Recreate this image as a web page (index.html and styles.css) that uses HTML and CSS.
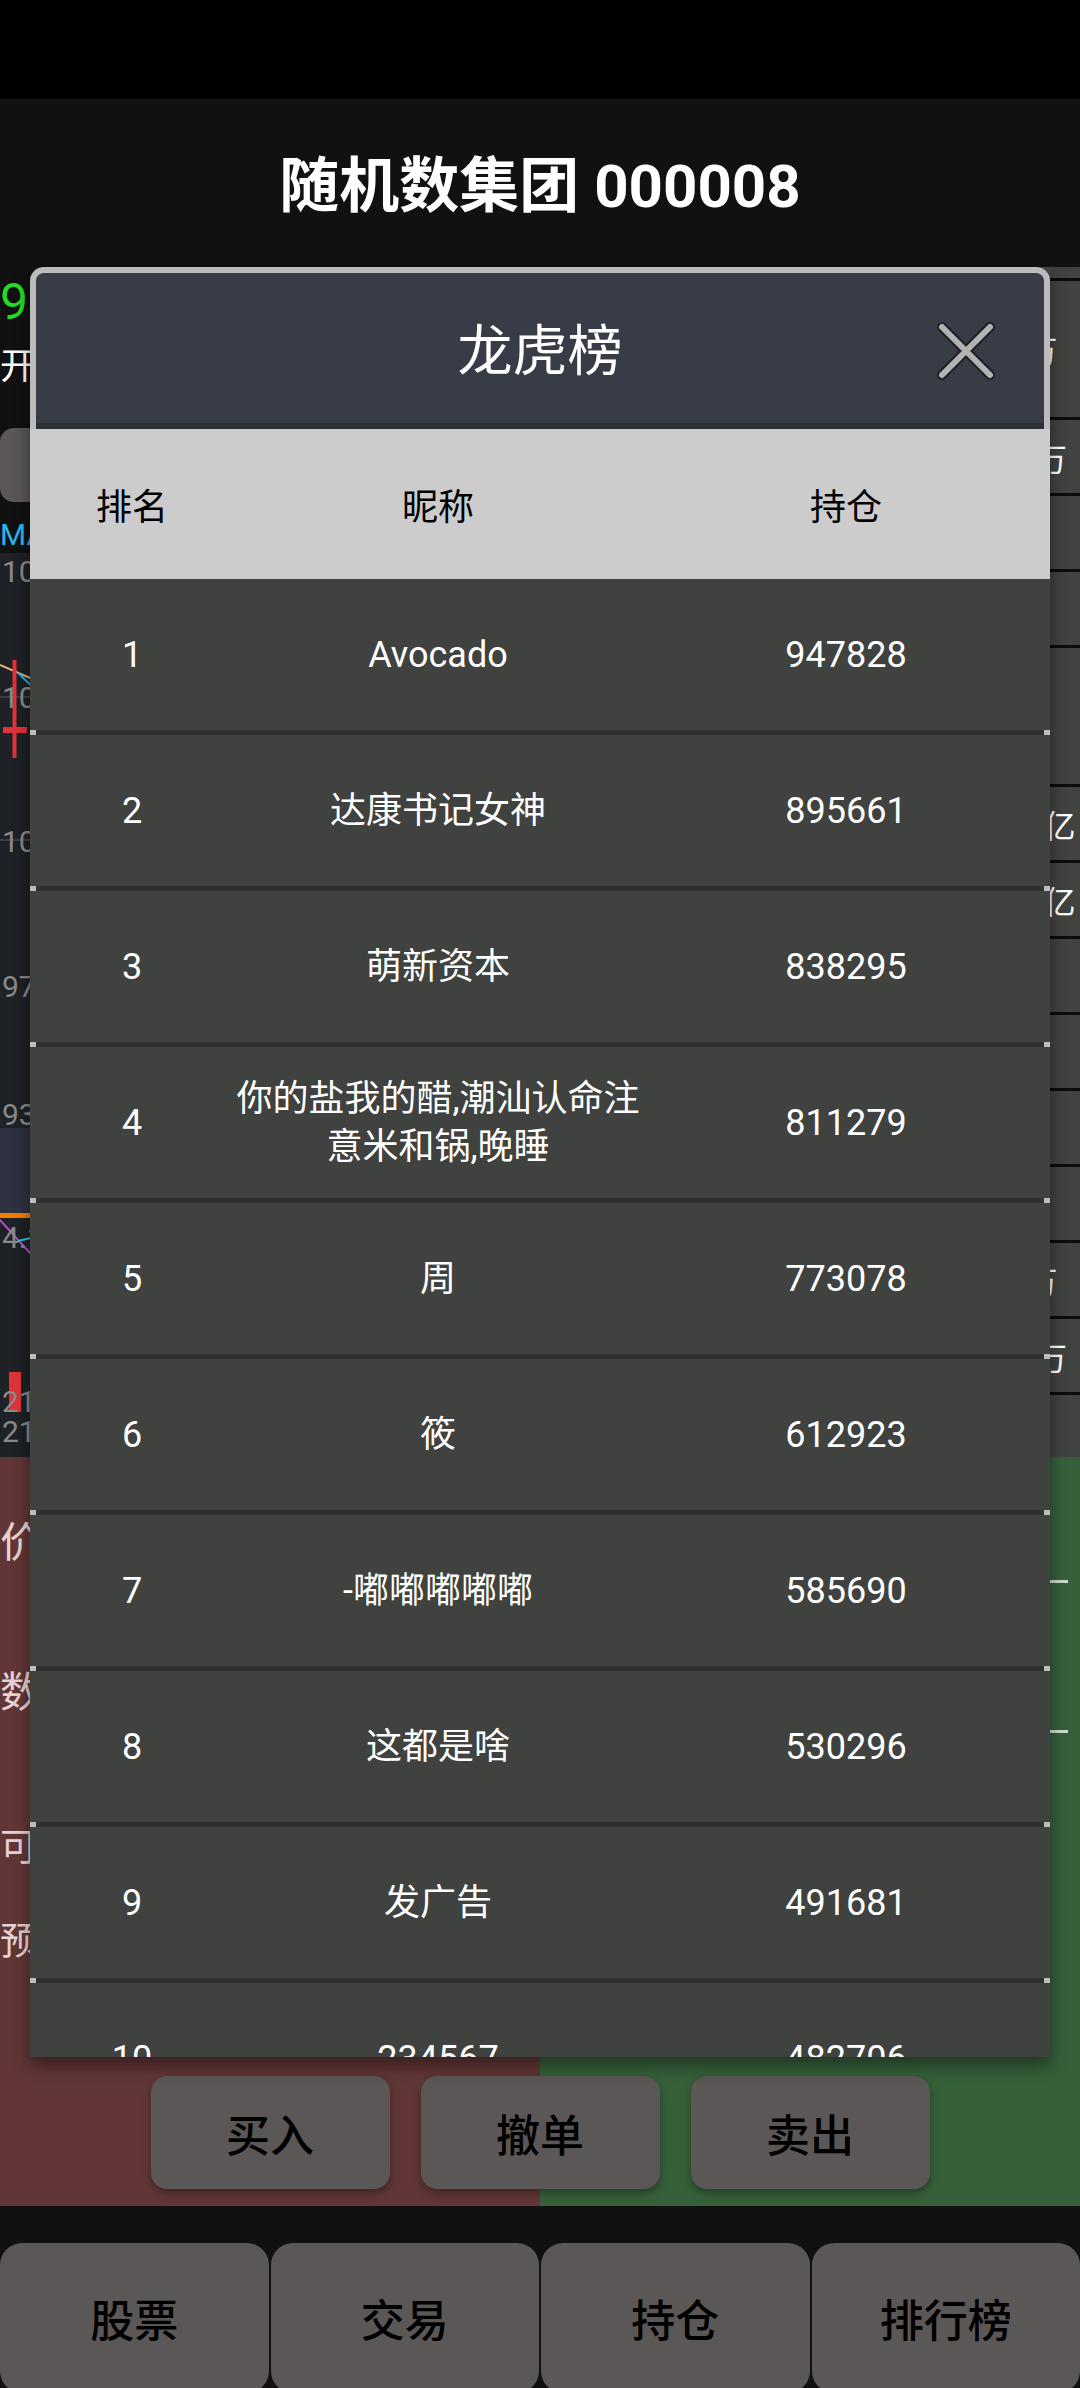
FILE: index.html
```html
<!DOCTYPE html>
<html lang="zh-CN">
<head>
    <meta charset="UTF-8">
    <meta name="viewport" content="width=device-width, initial-scale=1.0">
    <title>随机数集团 000008</title>
    <link rel="stylesheet" href="styles.css">
</head>
<body>
    <div class="screen">
        <div class="status-bar"></div>

        <header class="top-bar">
            <h1>随机数集团 000008</h1>
        </header>

        <main class="stock">
            <section class="quote">
                <div class="price">99.87</div>
                <div class="open-row">开 101.12</div>
                <div class="periods">
                    <span class="period">分时</span>
                    <span class="period">日K</span>
                    <span class="period">周K</span>
                    <span class="period">月K</span>
                </div>
                <div class="ma-row">MA5:100.21</div>

                <!-- K线图 -->
                <div class="chart">
                    <svg class="chart-svg" width="780" height="904" viewBox="0 0 780 904">
                        <rect x="0" y="575" width="780" height="85" fill="#2d3140"/>
                        <rect x="0" y="660" width="780" height="5" fill="#f57c00"/>
                        <line x1="0" y1="144" x2="780" y2="144" stroke="#3a3d43" stroke-width="2"/>
                        <line x1="0" y1="287" x2="780" y2="287" stroke="#3a3d43" stroke-width="2"/>
                        <line x1="0" y1="112" x2="60" y2="138" stroke="#e3b27a" stroke-width="2"/>
                        <line x1="18" y1="120" x2="60" y2="160" stroke="#2aa6dd" stroke-width="2"/>
                        <line x1="14.5" y1="107" x2="14.5" y2="205" stroke="#e0333b" stroke-width="4"/>
                        <rect x="3" y="174" width="24" height="6" fill="#e0333b"/>
                        <line x1="0" y1="667" x2="60" y2="733" stroke="#b24fc6" stroke-width="2"/>
                        <line x1="18" y1="688" x2="60" y2="678" stroke="#26c6da" stroke-width="2"/>
                        <rect x="9" y="819" width="12" height="40" fill="#e0333b"/>
                        <g class="axis">
                            <text x="2" y="29">104.35</text>
                            <text x="2" y="155">102.17</text>
                            <text x="2" y="299">100.09</text>
                            <text x="2" y="444">97.91</text>
                            <text x="2" y="572">93.62</text>
                            <text x="2" y="695">4.12</text>
                            <text x="2" y="859">21.5</text>
                            <text x="2" y="889">21.5</text>
                        </g>
                    </svg>
                </div>
            </section>

            <aside class="book">
                <div class="book-row tall"><span class="book-val">8.5万</span></div>
                <div class="book-row"><span class="book-val">123万</span></div>
                <div class="book-row"><span class="book-val">9.87</span></div>
                <div class="book-row"><span class="book-val">9.12</span></div>
                <div class="book-row tall"><span class="book-val">1.2%</span></div>
                <div class="book-row"><span class="book-val">8.65亿</span></div>
                <div class="book-row"><span class="book-val">2.31亿</span></div>
                <div class="book-row"><span class="book-val">9.76</span></div>
                <div class="book-row"><span class="book-val">9.75</span></div>
                <div class="book-row"><span class="book-val">9.74</span></div>
                <div class="book-row"><span class="book-val">9.73</span></div>
                <div class="book-row"><span class="book-val">6.2万</span></div>
                <div class="book-row"><span class="book-val">456万</span></div>
                <div class="book-row"><span class="book-val">3.05</span></div>
            </aside>
        </main>

        <section class="trade">
            <div class="trade-form">
                <div class="field-label">价格</div>
                <div class="field-input"><span class="input"></span></div>
                <div class="field-label">数量</div>
                <div class="field-input"><span class="input"></span></div>
            </div>
            <div class="trade-info">
                <div class="info">可用资金</div>
                <div class="info">预计金额</div>
            </div>
            <div class="trade-actions">
                <button class="action">买入</button>
                <button class="action">撤单</button>
                <button class="action">卖出</button>
            </div>
        </section>

        <nav class="tabbar">
            <button class="tab">股票</button>
            <button class="tab">交易</button>
            <button class="tab">持仓</button>
            <button class="tab">排行榜</button>
        </nav>

        <!-- 龙虎榜弹窗 -->
        <div class="dialog">
            <div class="dialog-head">
                <div class="dialog-title">龙虎榜</div>
                <svg class="close" viewBox="0 0 64 64" width="64" height="64">
                    <path d="M8 8L56 56M56 8L8 56" stroke="#1d2025" stroke-width="10" stroke-linecap="round"/>
                    <path d="M8 8L56 56M56 8L8 56" stroke="#b3b3b3" stroke-width="6" stroke-linecap="round"/>
                </svg>
            </div>
            <div class="rank-head">
                <span>排名</span>
                <span>昵称</span>
                <span>持仓</span>
            </div>
            <div class="rank-list">
                <div class="rank-row"><span>1</span><span>Avocado</span><span>947828</span></div>
                <div class="rank-row"><span>2</span><span>达康书记女神</span><span>895661</span></div>
                <div class="rank-row"><span>3</span><span>萌新资本</span><span>838295</span></div>
                <div class="rank-row"><span>4</span><span>你的盐我的醋,潮汕认命注意米和锅,晚睡</span><span>811279</span></div>
                <div class="rank-row"><span>5</span><span>周</span><span>773078</span></div>
                <div class="rank-row"><span>6</span><span>筱</span><span>612923</span></div>
                <div class="rank-row"><span>7</span><span>-嘟嘟嘟嘟嘟</span><span>585690</span></div>
                <div class="rank-row"><span>8</span><span>这都是啥</span><span>530296</span></div>
                <div class="rank-row"><span>9</span><span>发广告</span><span>491681</span></div>
                <div class="rank-row"><span>10</span><span>234567</span><span>482706</span></div>
            </div>
        </div>
    </div>
</body>
</html>
```

FILE: styles.css
```css
* {
    margin: 0;
    padding: 0;
    box-sizing: border-box;
}

body {
    font-family: Roboto, "Noto Sans CJK SC", sans-serif;
    background: #111;
    color: #fff;
    overflow: hidden;
}

.screen {
    position: relative;
    width: 1080px;
    height: 2388px;
    overflow: hidden;
    display: flex;
    flex-direction: column;
}

.status-bar {
    flex: none;
    height: 99px;
    background: #000;
}

.top-bar {
    flex: none;
    height: 168px;
    padding-top: 8px;
    display: flex;
    align-items: center;
    justify-content: center;
}

.top-bar h1 {
    font-size: 60px;
    font-weight: 700;
    line-height: 1;
}

/* 行情区 */
.stock {
    flex: none;
    height: 1190px;
    display: flex;
}

.quote {
    flex: 1;
    display: flex;
    flex-direction: column;
}

.price {
    color: #22dd22;
    font-size: 50px;
    line-height: 70px;
    white-space: nowrap;
}

.open-row {
    font-size: 36px;
    line-height: 60px;
    white-space: nowrap;
}

.periods {
    display: flex;
    gap: 14px;
    margin-top: 31px;
}

.period {
    width: 170px;
    height: 74px;
    background: #5a5756;
    border-radius: 14px;
    display: flex;
    align-items: center;
    justify-content: center;
    font-size: 34px;
}

.ma-row {
    color: #29b6f0;
    font-size: 30px;
    line-height: 36px;
    margin-top: 15px;
    white-space: nowrap;
}

.chart {
    flex: 1;
    background: #1e2125;
    overflow: hidden;
}

.chart-svg {
    display: block;
}

.axis text {
    font-family: Roboto, "Noto Sans CJK SC", sans-serif;
    font-size: 30px;
    fill: #8a8a8a;
}

.book {
    width: 300px;
    background: #404340;
    padding-top: 11px;
}

.book-row {
    display: flex;
    align-items: center;
    justify-content: flex-end;
    height: 76px;
    border-top: 3px solid #0b0b0b;
    font-size: 32px;
    white-space: nowrap;
}

.book-row.tall {
    height: 139px;
}

.book-val {
    flex: none;
    width: 99px;
}

/* 交易区 */
.trade {
    flex: none;
    height: 749px;
    padding-top: 6px;
    background: linear-gradient(to right, #623636 50%, #36603a 50%);
    display: flex;
    flex-direction: column;
}

.trade-form {
    display: grid;
    grid-template-columns: 1fr 1fr;
    grid-auto-rows: 150px;
}

.field-label {
    display: flex;
    align-items: center;
    font-size: 42px;
    color: #e6d2d2;
}

.field-input {
    padding-right: 12px;
}

.input {
    display: block;
    height: 120px;
    border-bottom: 3px solid #c9dcc9;
}

.trade-info {
    margin-top: 33px;
}

.info {
    height: 94px;
    display: flex;
    align-items: center;
    font-size: 38px;
    color: #e6d2d2;
}

.trade-actions {
    display: flex;
    justify-content: center;
    gap: 31px;
    margin-top: 92px;
}

.action {
    width: 239px;
    height: 113px;
    border: none;
    border-radius: 16px;
    background: #5a5756;
    color: #000;
    font-family: inherit;
    font-size: 44px;
    font-weight: 500;
    box-shadow: 0 4px 8px rgba(0,0,0,0.35);
}

.tabbar {
    flex: none;
    margin-top: 37px;
    display: grid;
    grid-template-columns: repeat(4, 1fr);
    gap: 2px;
}

.tab {
    height: 150px;
    border: none;
    border-radius: 22px;
    background: #5a5756;
    color: #000;
    font-family: inherit;
    font-size: 44px;
    font-weight: 500;
}

/* 弹窗 */
.dialog {
    position: absolute;
    left: 30px;
    top: 267px;
    width: 1020px;
    height: 1790px;
    display: flex;
    flex-direction: column;
    box-shadow: 0 8px 16px rgba(0,0,0,0.45);
}

.dialog-head {
    flex: none;
    height: 162px;
    border: 6px solid #bcbcbc;
    border-bottom: none;
    border-radius: 14px 14px 0 0;
    background: #373c46;
    box-shadow: inset 0 -6px 0 #2e3136;
    display: grid;
    grid-template-columns: 1fr auto 1fr;
    align-items: center;
}

.dialog-title {
    grid-column: 2;
    font-size: 55px;
    line-height: 1;
}

.close {
    justify-self: end;
    margin-right: 46px;
}

.rank-head,
.rank-row {
    display: grid;
    grid-template-columns: 1fr 2fr 2fr;
    align-items: center;
    text-align: center;
    font-size: 36px;
}

.rank-head {
    flex: none;
    height: 150px;
    background: #cccccc;
    color: #000;
}

.rank-list {
    flex: 1;
    overflow: hidden;
    background: #3f423f;
}

.rank-row {
    height: 156px;
    padding-bottom: 5px;
    line-height: 48px;
    background:
        linear-gradient(to right, #bdbdbd 6px, #2f2f2d 6px, #2f2f2d calc(100% - 6px), #bdbdbd calc(100% - 6px)) bottom / 100% 5px no-repeat,
        #3f423f;
}
```
